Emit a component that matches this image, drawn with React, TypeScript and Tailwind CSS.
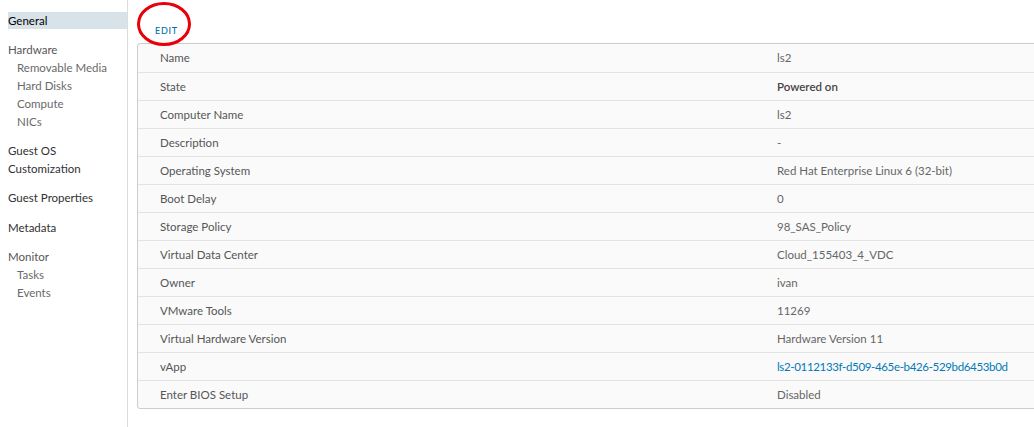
const general = [
  ['Name', 'ls2'],
  ['State', 'Powered on'],
  ['Computer Name', 'ls2'],
  ['Description', '-'],
  ['Operating System', 'Red Hat Enterprise Linux 6 (32-bit)'],
  ['Boot Delay', '0'],
  ['Storage Policy', '98_SAS_Policy'],
  ['Virtual Data Center', 'Cloud_155403_4_VDC'],
  ['Owner', 'ivan'],
  ['VMware Tools', '11269'],
  ['Virtual Hardware Version', 'Hardware Version 11'],
  ['vApp', 'ls2-0112133f-d509-465e-b426-529bd6453b0d'],
  ['Enter BIOS Setup', 'Disabled'],
];

function Sidebar() {
  return (
    <aside className="w-[128px] shrink-0 border-r border-[#dcdcdc] pl-2 pt-3 text-[11.5px] leading-[18px]">
      <div className="h-[17px] bg-[#d8e3e9] leading-[17px] text-[#000]">General</div>

      <div className="mt-[12px] text-[#565656]">Hardware</div>
      <div className="pl-[9px] text-[#6a6a6a]">
        <div>Removable Media</div>
        <div>Hard Disks</div>
        <div>Compute</div>
        <div>NICs</div>
      </div>

      <div className="mt-[11px] text-[#313131]">Guest OS</div>
      <div className="text-[#313131]">Customization</div>

      <div className="mt-[11px] text-[#313131]">Guest Properties</div>

      <div className="mt-[12px] text-[#313131]">Metadata</div>

      <div className="mt-[11px] text-[#565656]">Monitor</div>
      <div className="pl-[9px] text-[#6a6a6a]">
        <div>Tasks</div>
        <div>Events</div>
      </div>
    </aside>
  );
}

export default function App() {
  return (
    <div
      className="flex h-[427px] w-[1034px] overflow-hidden bg-white"
      style={{ fontFamily: 'Lato, "Open Sans", sans-serif' }}
    >
      <Sidebar />

      <main className="relative flex-1 overflow-hidden pl-[9px]">
        <div className="h-[43px] pl-[18px] pt-[25px]">
          <button className="block text-[9px] font-medium leading-[12px] tracking-[0.08em] text-[#0072a3]">EDIT</button>
        </div>

        {/* annotation circle round the edit button */}
        <svg className="absolute left-[9px] top-[1px]" width="56" height="46" viewBox="0 0 56 46">
          <ellipse cx="27" cy="23" rx="25.5" ry="20.5" fill="none" stroke="#e8000b" strokeWidth="3" />
        </svg>

        <div className="w-[940px] rounded-[3px] border border-[#cccccc] bg-[#fafafa] text-[11.5px]">
          {general.map(([label, value], i) => (
            <div
              key={label}
              className={`flex h-[28px] items-center ${i > 0 ? 'border-t border-[#e3e3e3]' : ''}`}
            >
              <div className="w-[617px] pl-[22px] text-[#565656]">{label}</div>
              <div
                className={
                  label === 'State'
                    ? 'pl-[22px] font-semibold text-[#454545]'
                    : label === 'vApp'
                      ? 'pl-[22px] tracking-[-0.03em] text-[#0079b8]'
                      : 'pl-[22px] text-[#666666]'
                }
              >
                {value}
              </div>
            </div>
          ))}
        </div>
      </main>
    </div>
  );
}
